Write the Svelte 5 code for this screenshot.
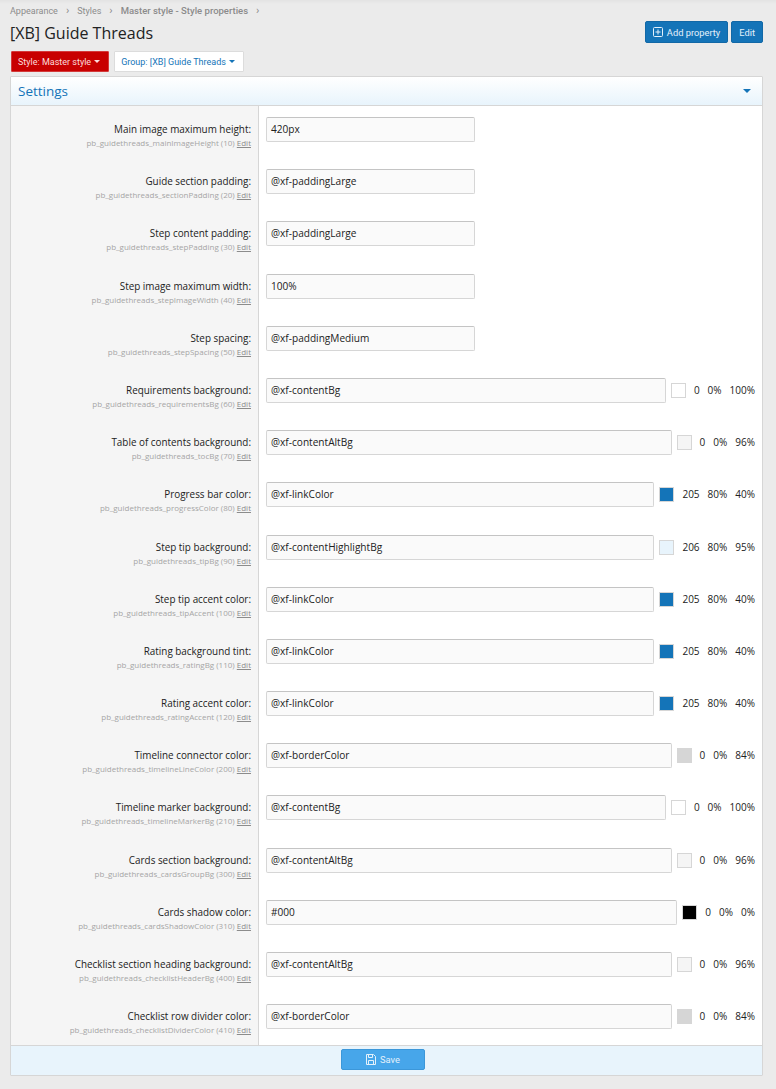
<script>
  const lnk = [205, 80, 40];
  const rows = [
    { label: 'Main image maximum height', id: 'mainImageHeight', order: 10, value: '420px' },
    { label: 'Guide section padding', id: 'sectionPadding', order: 20, value: '@xf-paddingLarge' },
    { label: 'Step content padding', id: 'stepPadding', order: 30, value: '@xf-paddingLarge' },
    { label: 'Step image maximum width', id: 'stepImageWidth', order: 40, value: '100%' },
    { label: 'Step spacing', id: 'stepSpacing', order: 50, value: '@xf-paddingMedium' },
    { label: 'Requirements background', id: 'requirementsBg', order: 60, value: '@xf-contentBg', hsl: [0, 0, 100] },
    { label: 'Table of contents background', id: 'tocBg', order: 70, value: '@xf-contentAltBg', hsl: [0, 0, 96] },
    { label: 'Progress bar color', id: 'progressColor', order: 80, value: '@xf-linkColor', hsl: lnk },
    { label: 'Step tip background', id: 'tipBg', order: 90, value: '@xf-contentHighlightBg', hsl: [206, 80, 95] },
    { label: 'Step tip accent color', id: 'tipAccent', order: 100, value: '@xf-linkColor', hsl: lnk },
    { label: 'Rating background tint', id: 'ratingBg', order: 110, value: '@xf-linkColor', hsl: lnk },
    { label: 'Rating accent color', id: 'ratingAccent', order: 120, value: '@xf-linkColor', hsl: lnk },
    { label: 'Timeline connector color', id: 'timelineLineColor', order: 200, value: '@xf-borderColor', hsl: [0, 0, 84] },
    { label: 'Timeline marker background', id: 'timelineMarkerBg', order: 210, value: '@xf-contentBg', hsl: [0, 0, 100] },
    { label: 'Cards section background', id: 'cardsGroupBg', order: 300, value: '@xf-contentAltBg', hsl: [0, 0, 96] },
    { label: 'Cards shadow color', id: 'cardsShadowColor', order: 310, value: '#000', hsl: [0, 0, 0] },
    { label: 'Checklist section heading background', id: 'checklistHeaderBg', order: 400, value: '@xf-contentAltBg', hsl: [0, 0, 96] },
    { label: 'Checklist row divider color', id: 'checklistDividerColor', order: 410, value: '@xf-borderColor', hsl: [0, 0, 84] }
  ];
</script>

<div class="page">
  <div class="crumbs">
    <span>Appearance</span><i>›</i>
    <span>Styles</span><i>›</i>
    <b>Master style - Style properties</b><i>›</i>
  </div>

  <div class="head">
    <h1>[XB] Guide Threads</h1>
    <div class="actions">
      <button class="btn">
        <svg width="10" height="10" viewBox="0 0 10 10" fill="none" stroke="currentColor">
          <rect x="0.5" y="0.5" width="9" height="9" rx="1" />
          <path d="M5 2.5v5M2.5 5h5" />
        </svg>
        Add property
      </button>
      <button class="btn">Edit</button>
    </div>
  </div>

  <div class="filters">
    <span class="pick red">Style: Master style<em></em></span>
    <span class="pick">Group: [XB] Guide Threads<em></em></span>
  </div>

  <div class="card">
    <div class="card-head">
      <span>Settings</span>
      <em></em>
    </div>

    <div class="rows">
      {#each rows as row}
        <div class="row">
          <div class="name">
            <div class="label">{row.label}:</div>
            <div class="hint">pb_guidethreads_{row.id} ({row.order}) <u>Edit</u></div>
          </div>
          <div class="field">
            <div class="input" class:short={!row.hsl}>{row.value}</div>
            {#if row.hsl}
              <span
                class="swatch"
                style="background: hsl({row.hsl[0]}, {row.hsl[1]}%, {row.hsl[2]}%)"
              ></span>
              <span class="hsl">
                <span>{row.hsl[0]}</span>
                <span>{row.hsl[1]}%</span>
                <span>{row.hsl[2]}%</span>
              </span>
            {/if}
          </div>
        </div>
      {/each}
    </div>

    <div class="foot">
      <button class="btn save">
        <svg width="10" height="11" viewBox="0 0 10 11" fill="none" stroke="currentColor">
          <path d="M0.5 0.5h7l2 2v8h-9z" />
          <path d="M2.5 0.5v3h4v-3M2.5 10.5v-4h5v4" />
        </svg>
        Save
      </button>
    </div>
  </div>
</div>

<style>
  :global(body) {
    margin: 0;
    background: #ebebeb;
  }

  .page {
    height: 1089px;
    box-sizing: border-box;
    padding: 3px 13px 0 10px;
    overflow: hidden;
    font-family: "Open Sans", "Noto Sans", sans-serif;
    font-size: 10px;
    color: #222;
    background: linear-gradient(#e3e3e3, #ebebeb 4px);
  }

  .crumbs {
    display: flex;
    align-items: center;
    height: 15px;
    font-family: Roboto, sans-serif;
    font-size: 9px;
    color: #8c8c8c;
  }

  .crumbs i {
    font-style: normal;
    margin: 0 8px;
    font-size: 11px;
    line-height: 10px;
  }

  .crumbs b {
    font-size: 9.5px;
    font-weight: 500;
    color: #8c8c8c;
  }

  .head {
    display: flex;
    justify-content: space-between;
    align-items: center;
    height: 26px;
    margin-top: 1px;
  }

  h1 {
    margin: 2px 0 0;
    font-size: 16px;
    font-weight: 400;
    color: #222;
  }

  .actions {
    display: flex;
    gap: 3px;
  }

  .btn {
    display: inline-flex;
    align-items: center;
    gap: 4px;
    box-sizing: border-box;
    height: 22px;
    padding: 0 7px;
    font-family: Roboto, sans-serif;
    font-size: 9.3px;
    color: #e4f1fb;
    background: #1474b8;
    border: 1px solid #1268a6;
    border-radius: 2px;
  }

  .filters {
    display: flex;
    gap: 5px;
    margin: 6px 0 0 1px;
  }

  .pick {
    display: inline-flex;
    align-items: center;
    gap: 3px;
    box-sizing: border-box;
    height: 21px;
    padding: 0 8px 0 6px;
    font-family: Roboto, sans-serif;
    font-size: 9px;
    color: #1474b8;
    background: #fff;
    border: 1px solid #dcdcdc;
    border-radius: 1px;
  }

  .pick.red {
    color: #fbdcdc;
    background: #c80000;
    border-color: #d43a3a;
  }

  .pick em {
    width: 0;
    height: 0;
    border: 3px solid transparent;
    border-top: 3px solid currentColor;
    border-bottom: 0;
  }

  .card {
    margin-top: 4px;
    background: #fff;
    border: 1px solid #d6d6d6;
    border-radius: 1px;
  }

  .card-head {
    display: flex;
    justify-content: space-between;
    align-items: center;
    box-sizing: border-box;
    height: 29px;
    padding: 0 11px 0 7px;
    font-size: 13.5px;
    color: #1474b8;
    background: linear-gradient(#fff, #e8f4fc);
    border-bottom: 1px solid #d6d6d6;
  }

  .card-head em {
    width: 0;
    height: 0;
    border: 4px solid transparent;
    border-top: 4px solid #1474b8;
    border-bottom: 0;
  }

  .row {
    display: flex;
    height: 52.2px;
  }

  .name {
    box-sizing: border-box;
    width: 248px;
    padding: 16px 7px 0 8px;
    text-align: right;
    background: #f5f5f5;
    border-right: 1px solid #d6d6d6;
  }

  .label {
    font-size: 9.9px;
    line-height: 14px;
    color: #222;
  }

  .hint {
    font-size: 8px;
    line-height: 13px;
    color: #a5a5a5;
    white-space: nowrap;
  }

  .hint u {
    color: #8c8c8c;
  }

  .field {
    display: flex;
    flex: 1;
    align-items: flex-start;
    padding: 11px 7px 0;
    min-width: 0;
  }

  .input {
    flex: 1;
    box-sizing: border-box;
    height: 25px;
    padding: 0 4px;
    line-height: 23px;
    font-size: 10.1px;
    background: #fafafa;
    border: 1px solid #d6d6d6;
    border-top-color: #c4c4c4;
    border-radius: 2px;
  }

  .input.short {
    flex: none;
    width: 209px;
  }

  .swatch {
    flex: none;
    box-sizing: border-box;
    width: 15px;
    height: 15px;
    margin: 5px 0 0 5px;
    border: 1px solid #d6d6d6;
  }

  .hsl {
    display: flex;
    gap: 8px;
    margin-left: 8px;
    font-size: 10px;
    line-height: 25px;
    white-space: nowrap;
  }

  .foot {
    display: flex;
    justify-content: center;
    box-sizing: border-box;
    height: 30px;
    padding: 3px 7px 0 0;
    background: #e8f4fc;
    border-top: 1px solid #d6d6d6;
  }

  .save {
    justify-content: center;
    width: 84px;
    height: 21px;
    background: #47a6ea;
    border-color: #3c97d9;
  }
</style>
